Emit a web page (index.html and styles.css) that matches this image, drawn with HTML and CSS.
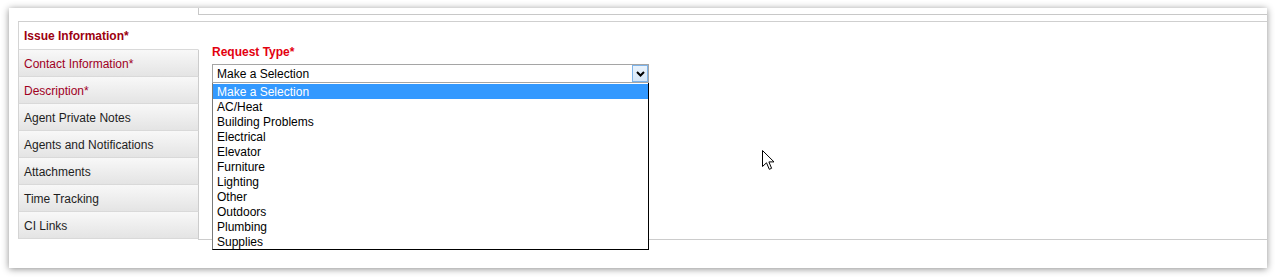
FILE: index.html
```html
<!DOCTYPE html>
<html>
<head>
<meta charset="utf-8">
<link rel="stylesheet" href="styles.css">
</head>
<body>
<div class="page">
  <div class="card">
    <div class="topstrip"></div>
    <div class="tabs">
      <div class="tablist">
        <div class="tab active">Issue Information*</div>
        <div class="tab req">Contact Information*</div>
        <div class="tab req">Description*</div>
        <div class="tab">Agent Private Notes</div>
        <div class="tab">Agents and Notifications</div>
        <div class="tab">Attachments</div>
        <div class="tab">Time Tracking</div>
        <div class="tab">CI Links</div>
      </div>
      <div class="panel">
        <div class="label">Request Type*</div>
        <div class="selectwrap">
          <div class="select">
            <span class="selval">Make a Selection</span>
            <span class="arrow"><svg width="9" height="6" viewBox="0 0 9 6"><path d="M1 1 L4.5 4.5 L8 1" fill="none" stroke="#000" stroke-width="2"/></svg></span>
          </div>
          <div class="dropdown">
            <div class="opt sel">Make a Selection</div>
            <div class="opt">AC/Heat</div>
            <div class="opt">Building Problems</div>
            <div class="opt">Electrical</div>
            <div class="opt">Elevator</div>
            <div class="opt">Furniture</div>
            <div class="opt">Lighting</div>
            <div class="opt">Other</div>
            <div class="opt">Outdoors</div>
            <div class="opt">Plumbing</div>
            <div class="opt">Supplies</div>
          </div>
        </div>
      </div>
    </div>
  </div>
  <svg class="cursor" width="14" height="21" viewBox="0 0 14 21"><path d="M0.5 0.5 L0.5 16.5 L4.5 12.8 L7.3 19.3 L9.6 18.3 L6.9 11.9 L12 11.9 Z" fill="#fff" stroke="#000" stroke-width="1" stroke-linejoin="miter"/></svg>
</div>
</body>
</html>
```
FILE: styles.css
```css
html, body {
  margin: 0;
  padding: 0;
  background: #fff;
}
.page {
  position: relative;
  width: 1275px;
  height: 278px;
  padding: 8px 0 0 9px;
  box-sizing: border-box;
  font-family: "Liberation Sans", Arial, sans-serif;
  font-size: 12px;
}
.card {
  width: 1258px;
  height: 260px;
  background: #fff;
  box-shadow: 0 1px 7px rgba(0,0,0,0.45);
  padding-left: 9px;
  box-sizing: border-box;
}
.topstrip {
  margin-left: 180px;
  height: 6px;
  border-left: 1px solid #c8c8c8;
  border-bottom: 1px solid #c8c8c8;
}
.tabs {
  margin-top: 6px;
  border-top: 1px solid #cfcfcf;
  display: flex;
}
.tablist {
  width: 181px;
  margin-right: -1px;
  position: relative;
  z-index: 1;
  display: flex;
  flex-direction: column;
}
.tab {
  height: 25px;
  line-height: 26px;
  padding-top: 1px;
  border-left: 1px solid #d4d4d4;
  border-right: 1px solid #cccccc;
  border-bottom: 1px solid #d9d9d9;
  background: linear-gradient(#f8f8f8, #e4e4e4);
  padding-left: 5px;
  color: #1e1e1e;
  white-space: nowrap;
}
.tab.req {
  color: #a0001e;
}
.tab.active {
  height: 26px;
  line-height: 27px;
  background: #fff;
  border-right-color: #fff;
  font-weight: bold;
  color: #9c0010;
}
.panel {
  flex: 1;
  height: 218px;
  border-left: 1px solid #cccccc;
  border-bottom: 1px solid #cccccc;
  padding: 23px 0 0 13px;
  box-sizing: border-box;
}
.label {
  font-weight: bold;
  color: #e3000f;
  line-height: 14px;
}
.selectwrap {
  position: relative;
  margin-top: 5px;
  width: 437px;
}
.select {
  height: 19px;
  border: 1px solid #a5a5a5;
  box-sizing: border-box;
  display: flex;
  align-items: center;
  justify-content: space-between;
  background: #fff;
}
.selval {
  padding-left: 4px;
  padding-top: 1px;
  color: #000;
}
.arrow {
  width: 16px;
  height: 17px;
  box-sizing: border-box;
  border: 1px solid #7eb4ea;
  background: linear-gradient(#eaf3fc, #d6e7f8);
  display: flex;
  align-items: center;
  justify-content: center;
}
.dropdown {
  position: absolute;
  left: 0;
  top: 19px;
  width: 437px;
  box-sizing: border-box;
  border-left: 1px solid #7a7a7a;
  border-right: 1px solid #000;
  border-bottom: 1px solid #000;
  background: #fff;
  padding-top: 1px;
}
.opt {
  height: 14px;
  line-height: 15px;
  padding-top: 1px;
  padding-left: 4px;
  color: #000;
}
.opt.sel {
  background: #3399ff;
  color: #fff;
}
.cursor {
  position: absolute;
  left: 762px;
  top: 150px;
}
```
